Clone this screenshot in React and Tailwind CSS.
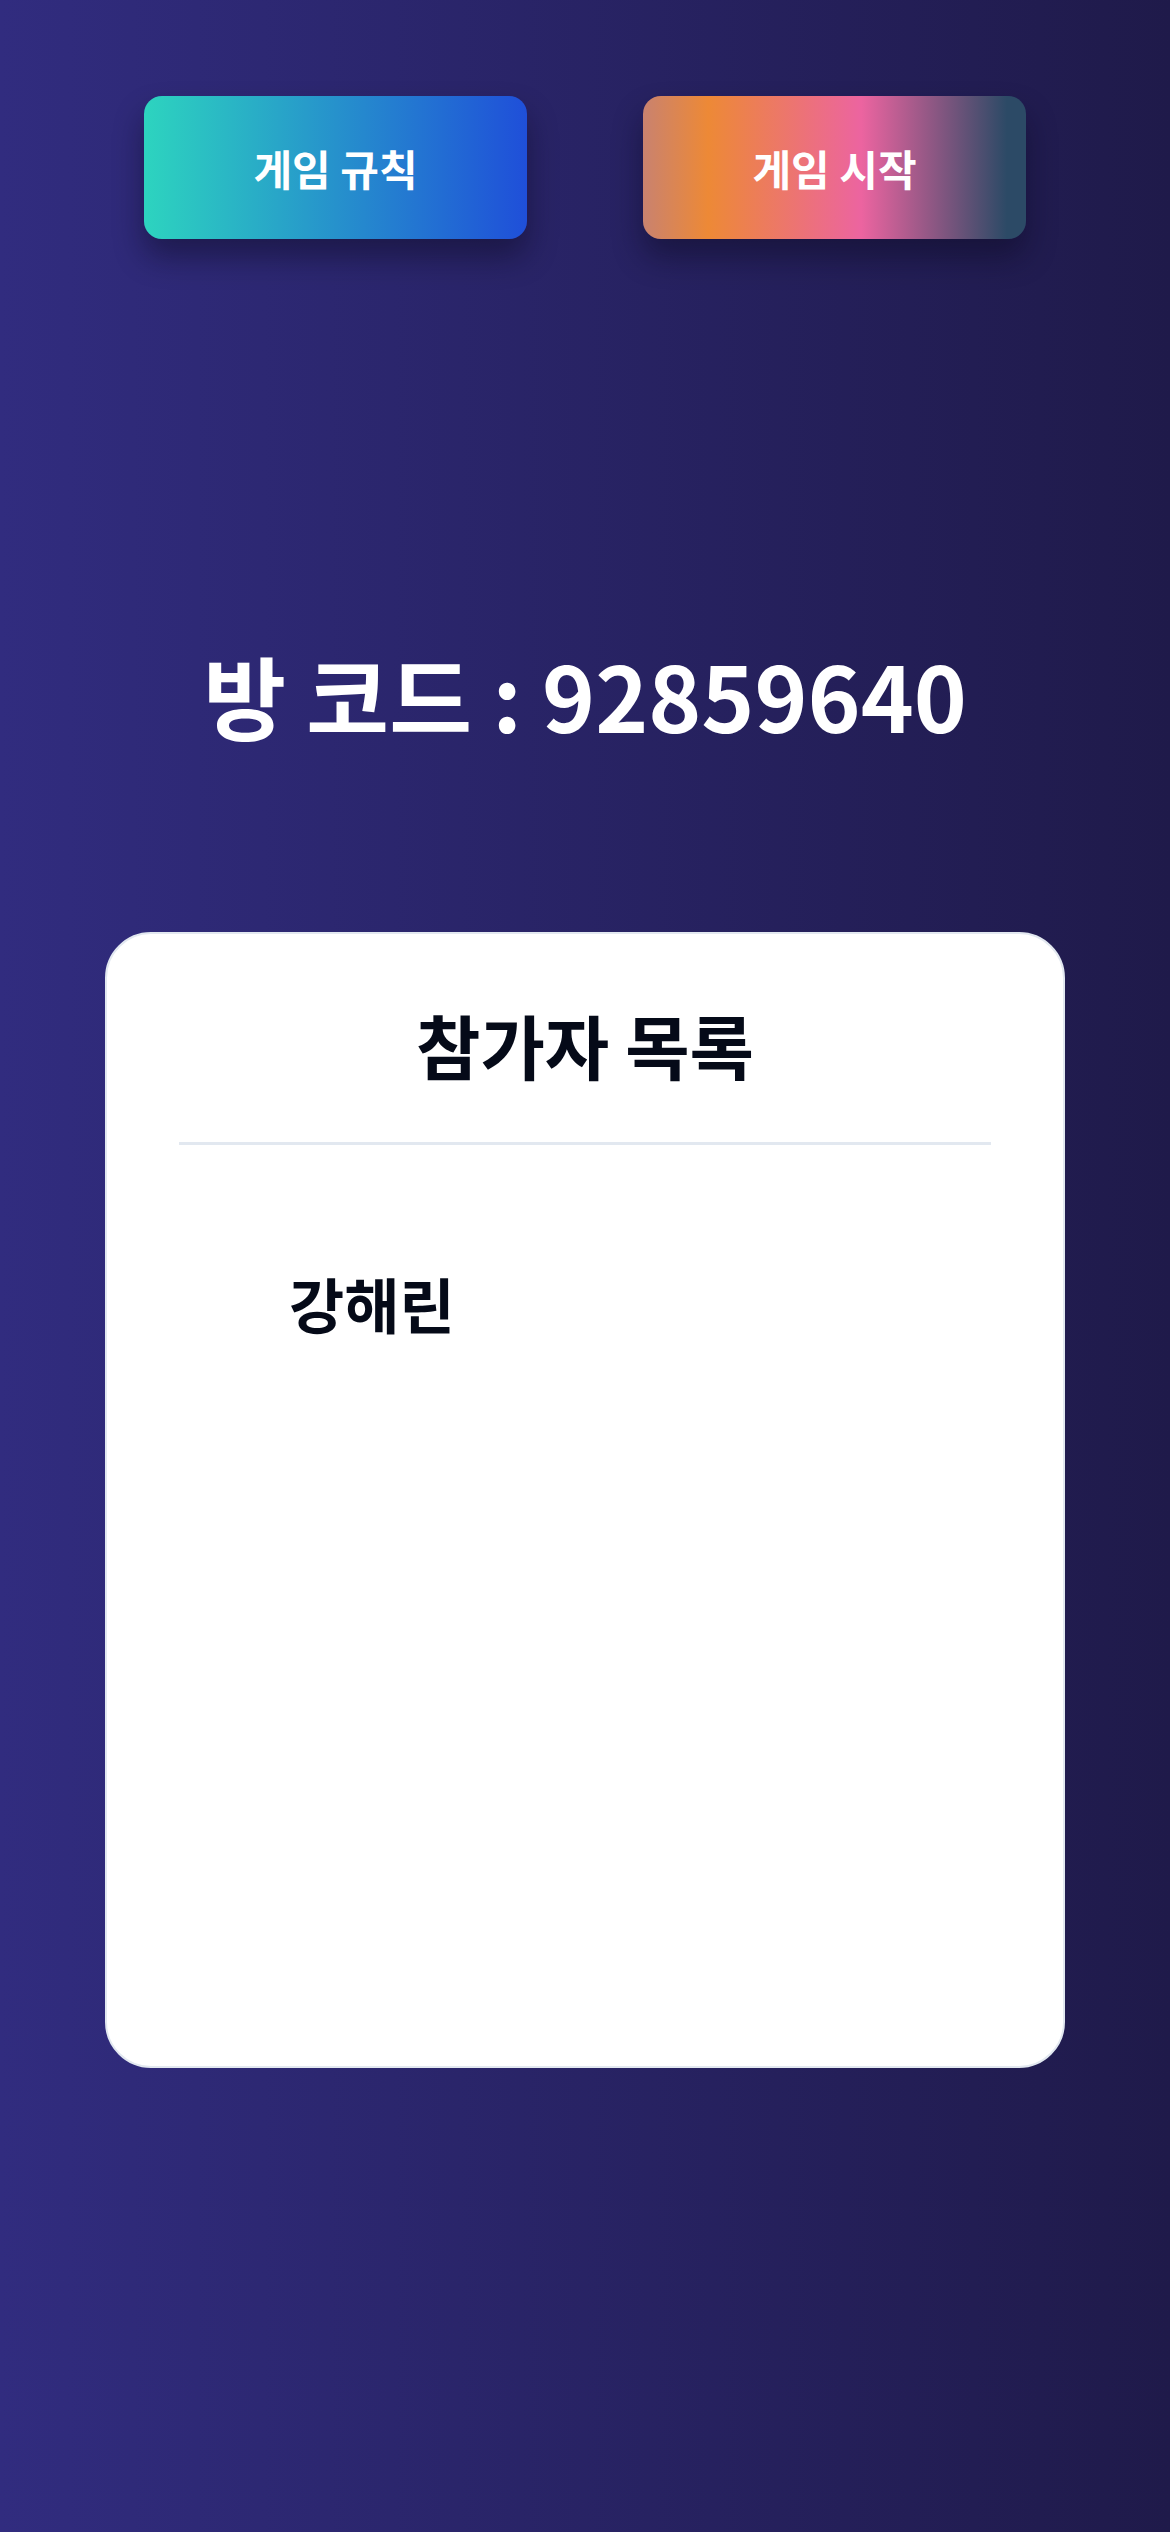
const FONT = { fontFamily: '"Noto Sans CJK KR", "Noto Sans", sans-serif' }

function GameButton({ label, gradient }) {
  return (
    <button
      type="button"
      className={`flex h-[143px] w-[383px] items-center justify-center rounded-[18px] text-[42px] font-bold text-white shadow-[0_18px_30px_rgba(10,8,30,0.45)] ${gradient}`}
    >
      {label}
    </button>
  )
}

export default function App() {
  const players = ['강해린']

  return (
    <div
      className="flex min-h-[2532px] w-full flex-col items-center bg-[linear-gradient(to_right,#312c7f,#1f1a4a)]"
      style={FONT}
    >
      <div className="mt-[96px] flex gap-[116px]">
        <GameButton label="게임 규칙" gradient="bg-[linear-gradient(to_right,#2dd4bf,#1f4fd9)]" />
        <GameButton
          label="게임 시작"
          gradient="bg-[linear-gradient(to_right,#c9826f_0%,#ed8936_17%,#ec64a0_57%,#2c4a66_95%)]"
        />
      </div>

      <h1 className="mt-[410px] text-[90px] font-bold leading-none text-white">방 코드 : 92859640</h1>

      <section className="mt-[193px] flex h-[1136px] w-[960px] flex-col rounded-[46px] border-2 border-[#e2e8f0] bg-white px-[72px]">
        <h2 className="mt-[76px] text-center text-[70px] font-bold leading-none text-[#050a18]">참가자 목록</h2>
        <div className="mt-[62px] h-[3px] w-full bg-[#e2e8f0]" />
        <ul className="mt-[128px] flex flex-col gap-6 pl-[110px]">
          {players.map((name) => (
            <li key={name} className="text-[60px] font-bold leading-none text-[#050a18]">
              {name}
            </li>
          ))}
        </ul>
      </section>
    </div>
  )
}
